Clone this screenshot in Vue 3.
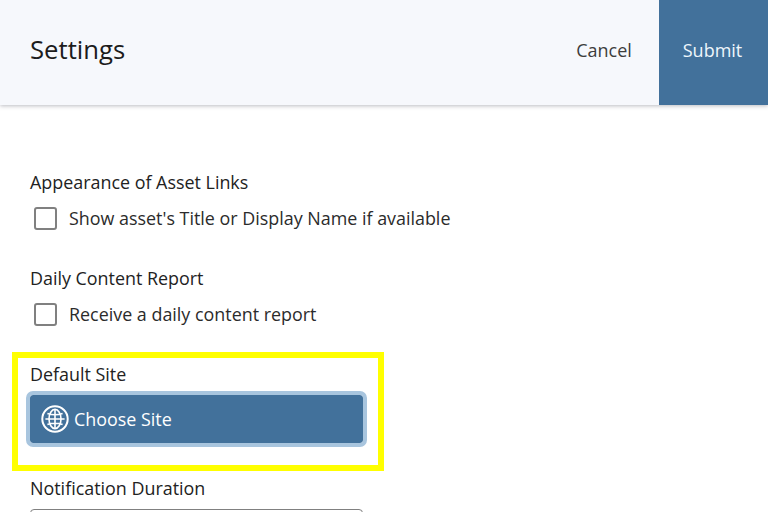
<script setup>
const fields = [
  { label: 'Appearance of Asset Links', check: "Show asset's Title or Display Name if available" },
  { label: 'Daily Content Report', check: 'Receive a daily content report' }
]
</script>

<template>
  <div class="page">
    <header class="bar">
      <h1 class="title">Settings</h1>
      <div class="actions">
        <button class="cancel">Cancel</button>
        <button class="submit">Submit</button>
      </div>
    </header>
    <main class="form">
      <section v-for="f in fields" :key="f.label" class="field">
        <div class="label">{{ f.label }}</div>
        <label class="check"><span class="box"></span><span>{{ f.check }}</span></label>
      </section>
      <section class="site">
        <div class="highlight"></div>
        <div class="label">Default Site</div>
        <button class="choose">
          <svg class="globe" viewBox="0 0 28 28" fill="none" stroke="#fff">
            <circle cx="14" cy="14" r="12.7" stroke-width="2" />
            <ellipse cx="14" cy="14" rx="6" ry="9.6" stroke-width="1.6" />
            <path d="M14 4.4V23.6M4.4 14H23.6M6.4 8.4Q14 11.2 21.6 8.4M6.4 19.6Q14 16.8 21.6 19.6" stroke-width="1.6" />
          </svg>
          <span>Choose Site</span>
        </button>
      </section>
      <section class="duration">
        <div class="label">Notification Duration</div>
        <div class="select"></div>
      </section>
    </main>
  </div>
</template>

<style>
html, body { margin: 0; overflow: hidden; background: #fff; }
</style>

<style scoped>
.page {
  width: 768px;
  height: 512px;
  overflow: hidden;
  font-family: "Open Sans", "Noto Sans", sans-serif;
  color: #222;
  background: #fff;
}
.bar {
  height: 105px;
  display: flex;
  align-items: center;
  justify-content: space-between;
  padding-left: 30px;
  background: #f6f8fc;
  box-shadow: 0 1px 4px rgba(60, 64, 80, 0.35);
}
.title {
  margin: 0 0 6px;
  font-size: 25.7px;
  line-height: 34px;
  font-weight: 400;
  color: #1c1c1c;
}
.actions {
  display: flex;
  align-self: stretch;
  align-items: stretch;
}
.actions button {
  border: 0;
  font: inherit;
  font-size: 18px;
  padding: 0 0 6px;
}
.cancel {
  width: 110px;
  background: transparent;
  color: #3d3d3d;
}
.submit {
  width: 109px;
  background: #42719b;
  color: #eef6fc;
}
.actions .submit {
  padding-right: 2px;
}
.form {
  padding: 64px 0 0 30px;
}
.field {
  height: 96px;
}
.label {
  font-size: 17.9px;
  line-height: 26px;
  color: #222;
}
.check {
  display: flex;
  align-items: center;
  gap: 12px;
  margin-top: 10px;
  padding-left: 4px;
  font-size: 17.9px;
  line-height: 26px;
  color: #2b2b2b;
}
.box {
  box-sizing: border-box;
  width: 23px;
  height: 23px;
  border: 2.5px solid #808080;
  border-radius: 3px;
  background: #fff;
}
.site {
  position: relative;
  height: 114px;
}
.highlight {
  position: absolute;
  left: -18px;
  top: -9px;
  box-sizing: border-box;
  width: 372px;
  height: 119px;
  border: 6px solid #ffff00;
  pointer-events: none;
}
.choose {
  display: flex;
  align-items: center;
  gap: 5px;
  box-sizing: border-box;
  width: 333px;
  height: 48px;
  margin-top: 8px;
  padding: 0 0 0 11px;
  border: 0;
  border-radius: 3px;
  outline: 4px solid #a8c5de;
  outline-offset: 0;
  background: #42719b;
  color: #fff;
  font: inherit;
  font-size: 17.9px;
}
.globe {
  width: 28px;
  height: 28px;
  flex: none;
}
.select {
  box-sizing: border-box;
  width: 333px;
  height: 40px;
  margin-top: 8px;
  border: 1px solid #808080;
  border-radius: 4px;
}
</style>
